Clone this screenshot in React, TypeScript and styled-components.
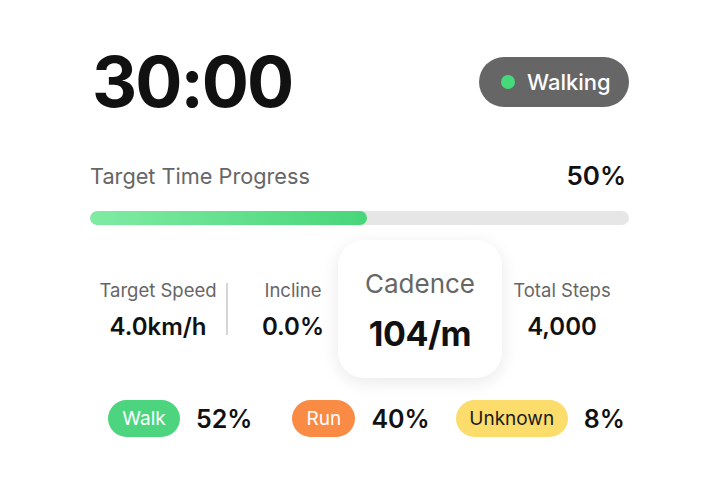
import React from "react";
import styled, { createGlobalStyle } from "styled-components";

const Global = createGlobalStyle`
  html, body { margin: 0; padding: 0; background: #ffffff; }
  body { font-family: Inter, "Noto Sans", sans-serif; -webkit-font-smoothing: antialiased; }
`;

const Page = styled.div`
  width: 720px;
  height: 480px;
  display: flex;
  justify-content: center;
  padding-top: 28px;
  box-sizing: border-box;
`;

const Card = styled.div`
  width: 610px;
  height: 420px;
  box-sizing: border-box;
  padding: 19px 36px 0 35px;
  border-radius: 24px;
  background: #fff;
  box-shadow: 0 0 2px rgba(0, 0, 0, 0.015);
  display: flex;
  flex-direction: column;
`;

const Header = styled.div`
  display: flex;
  justify-content: space-between;
  align-items: center;
  height: 70px;
`;

const Timer = styled.div`
  font-size: 70px;
  font-weight: 700;
  color: #111;
  letter-spacing: -2px;
  margin-left: 2px;
  line-height: 1;
`;

const StatusPill = styled.div`
  display: flex;
  align-items: center;
  gap: 12px;
  height: 50px;
  width: 150px;
  box-sizing: border-box;
  padding-left: 22px;
  border-radius: 25px;
  background: #666666;
  color: #fff;
  font-size: 22px;
  font-weight: 500;
`;

const Dot = styled.span`
  width: 14px;
  height: 14px;
  border-radius: 50%;
  background: #46d97a;
`;

const ProgressHead = styled.div`
  margin-top: 43px;
  display: flex;
  justify-content: space-between;
  align-items: center;
`;

const ProgressLabel = styled.div`
  font-size: 21.7px;
  color: #666;
`;

const ProgressValue = styled.div`
  font-size: 26px;
  font-weight: 600;
  color: #111;
  margin-right: 3px;
`;

const Track = styled.div`
  margin-top: 20px;
  height: 14px;
  border-radius: 7px;
  background: #e6e6e6;
  overflow: hidden;
`;

const Fill = styled.div`
  height: 100%;
  border-radius: 7px;
  background: linear-gradient(90deg, #80eba3 0%, #48d679 100%);
`;

const Stats = styled.div`
  margin-top: 15px;
  display: flex;
  align-items: center;
  height: 138px;
`;

const Stat = styled.div<{ $w: number; $ml?: number }>`
  width: ${(p) => p.$w}px;
  margin-left: ${(p) => p.$ml ?? 0}px;
  display: flex;
  flex-direction: column;
  align-items: center;
  gap: 11px;
  padding-top: 2px;
`;

const StatLabel = styled.div`
  font-size: 18.5px;
  color: #666;
`;

const StatValue = styled.div`
  font-size: 24px;
  font-weight: 600;
  color: #111;
`;

const Divider = styled.div`
  width: 2px;
  height: 52px;
  background: #d6d6d6;
`;

const CadenceCard = styled.div`
  width: 164px;
  height: 138px;
  border-radius: 26px;
  background: #fff;
  box-shadow: 0 4px 18px rgba(0, 0, 0, 0.09);
  display: flex;
  flex-direction: column;
  align-items: center;
  justify-content: center;
  gap: 14px;
  padding-top: 4px;
  box-sizing: border-box;
`;

const CadenceLabel = styled.div`
  font-size: 26px;
  color: #666;
`;

const CadenceValue = styled.div`
  font-size: 34px;
  font-weight: 700;
  color: #111;
  letter-spacing: -0.5px;
`;

const Breakdown = styled.div`
  margin-top: 22px;
  margin-left: 18px;
  display: flex;
  align-items: center;
`;

const Group = styled.div<{ $ml: number }>`
  display: flex;
  align-items: center;
  gap: 16px;
  margin-left: ${(p) => p.$ml}px;
`;

const Tag = styled.div<{ $bg: string; $fg: string; $w: number }>`
  height: 37px;
  width: ${(p) => p.$w}px;
  border-radius: 19px;
  background: ${(p) => p.$bg};
  color: ${(p) => p.$fg};
  font-size: 19px;
  display: flex;
  align-items: center;
  justify-content: center;
`;

const Pct = styled.div`
  font-size: 25px;
  font-weight: 600;
  color: #111;
`;

export default function App() {
  const progress = 51.4;
  return (
    <>
      <Global />
      <Page>
        <Card>
          <Header>
            <Timer>30:00</Timer>
            <StatusPill>
              <Dot />
              Walking
            </StatusPill>
          </Header>
          <ProgressHead>
            <ProgressLabel>Target Time Progress</ProgressLabel>
            <ProgressValue>50%</ProgressValue>
          </ProgressHead>
          <Track>
            <Fill style={{ width: `${progress}%` }} />
          </Track>
          <Stats>
            <Stat $w={136}>
              <StatLabel>Target Speed</StatLabel>
              <StatValue>4.0km/h</StatValue>
            </Stat>
            <Divider />
            <Stat $w={90} $ml={20}>
              <StatLabel>Incline</StatLabel>
              <StatValue>0.0%</StatValue>
            </Stat>
            <CadenceCard>
              <CadenceLabel>Cadence</CadenceLabel>
              <CadenceValue>104/m</CadenceValue>
            </CadenceCard>
            <Stat $w={120}>
              <StatLabel>Total Steps</StatLabel>
              <StatValue>4,000</StatValue>
            </Stat>
          </Stats>
          <Breakdown>
            <Group $ml={0}>
              <Tag $bg="#4cd57e" $fg="#fff" $w={72}>Walk</Tag>
              <Pct>52%</Pct>
            </Group>
            <Group $ml={40}>
              <Tag $bg="#fa8b45" $fg="#fff" $w={63}>Run</Tag>
              <Pct>40%</Pct>
            </Group>
            <Group $ml={26}>
              <Tag $bg="#fcdc6b" $fg="#1a1a1a" $w={112}>Unknown</Tag>
              <Pct>8%</Pct>
            </Group>
          </Breakdown>
        </Card>
      </Page>
    </>
  );
}
